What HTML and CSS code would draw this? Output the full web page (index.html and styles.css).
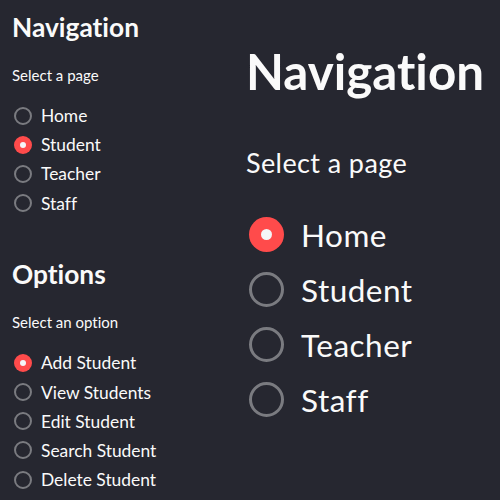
FILE: index.html
```html
<!DOCTYPE html>
<html>
<head>
<meta charset="utf-8">
<title>Navigation</title>
<link rel="stylesheet" href="styles.css">
</head>
<body>
<div class="app">
  <aside class="sidebar">
    <h2 class="side-title">Navigation</h2>
    <div class="side-label">Select a page</div>
    <div class="side-group">
      <div class="side-item"><span class="dot"></span><span>Home</span></div>
      <div class="side-item"><span class="dot on"></span><span>Student</span></div>
      <div class="side-item"><span class="dot"></span><span>Teacher</span></div>
      <div class="side-item"><span class="dot"></span><span>Staff</span></div>
    </div>
    <h2 class="side-title second">Options</h2>
    <div class="side-label">Select an option</div>
    <div class="side-group">
      <div class="side-item"><span class="dot on"></span><span>Add Student</span></div>
      <div class="side-item"><span class="dot"></span><span>View Students</span></div>
      <div class="side-item"><span class="dot"></span><span>Edit Student</span></div>
      <div class="side-item"><span class="dot"></span><span>Search Student</span></div>
      <div class="side-item"><span class="dot"></span><span>Delete Student</span></div>
    </div>
  </aside>
  <main class="main">
    <h1 class="main-title">Navigation</h1>
    <div class="main-label">Select a page</div>
    <div class="main-group">
      <div class="main-item"><span class="bigdot on"></span><span>Home</span></div>
      <div class="main-item"><span class="bigdot"></span><span>Student</span></div>
      <div class="main-item"><span class="bigdot"></span><span>Teacher</span></div>
      <div class="main-item"><span class="bigdot"></span><span>Staff</span></div>
    </div>
  </main>
</div>
</body>
</html>
```
FILE: styles.css
```css
html, body {
  margin: 0;
  height: 100%;
  background: #262730;
}
body {
  color: #fafafa;
  font-family: "Lato", "Noto Sans", sans-serif;
  font-variant-ligatures: none;
}
.app {
  display: grid;
  grid-template-columns: 235px 1fr;
  height: 500px;
  overflow: hidden;
}

/* Sidebar */
.sidebar {
  padding: 11px 0 0 12px;
}
.side-title {
  margin: 0;
  font-size: 26.3px;
  font-weight: 700;
  line-height: 32px;
}
.side-title.second {
  margin-top: 40.5px;
}
.side-label {
  margin-top: 22px;
  font-size: 15px;
  line-height: 20px;
}
.side-group {
  margin-top: 16px;
  display: flex;
  flex-direction: column;
}
.side-item {
  display: flex;
  align-items: center;
  height: 29.2px;
  font-size: 17.4px;
  gap: 9px;
}
.dot {
  box-sizing: border-box;
  width: 18px;
  height: 18px;
  margin-left: 2px;
  border-radius: 50%;
  border: 2px solid #7a7b80;
  flex: none;
  position: relative;
}
.dot.on {
  border: none;
  background: #ff4b4b;
}
.dot.on::after {
  content: "";
  position: absolute;
  left: 6px;
  top: 6px;
  width: 6px;
  height: 6px;
  border-radius: 50%;
  background: #f5f5f7;
}

/* Main */
.main {
  padding: 41px 0 0 11px;
}
.main-title {
  margin: 0;
  font-size: 49.3px;
  font-weight: 700;
  line-height: 60px;
}
.main-label {
  margin-top: 44px;
  font-size: 27px;
  letter-spacing: 0.4px;
  line-height: 36px;
}
.main-group {
  margin-top: 26px;
  display: flex;
  flex-direction: column;
}
.main-item {
  display: flex;
  align-items: center;
  height: 55px;
  font-size: 31.5px;
  letter-spacing: 0.5px;
  gap: 17px;
}
.bigdot {
  box-sizing: border-box;
  width: 35px;
  height: 35px;
  margin-left: 3px;
  border-radius: 50%;
  border: 3.5px solid #7a7b80;
  flex: none;
  position: relative;
}
.bigdot.on {
  border: none;
  background: #ff4b4b;
}
.bigdot.on::after {
  content: "";
  position: absolute;
  left: 12px;
  top: 12px;
  width: 11px;
  height: 11px;
  border-radius: 50%;
  background: #f5f5f7;
}
```
